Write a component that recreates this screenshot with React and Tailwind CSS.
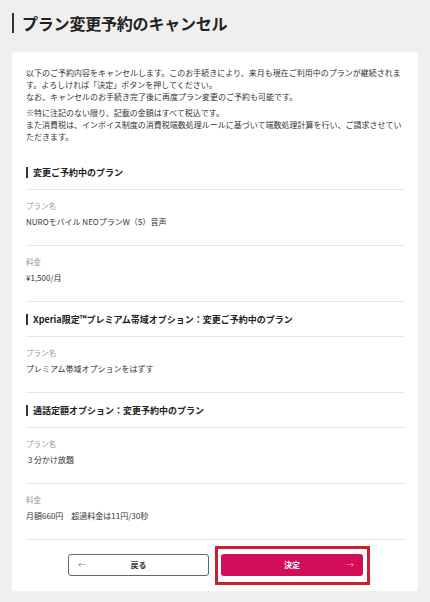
const font = { fontFamily: '"Noto Sans CJK JP", "Noto Sans", sans-serif' };

function SectionHeading({ children }) {
  return (
    <div className="flex h-[35px] items-center border-b border-[#e6e6e6]">
      <span className="mr-[5px] h-[11px] w-[2px] bg-[#333]" />
      <span className="text-[9px] font-bold leading-none text-[#222]">{children}</span>
    </div>
  );
}

function Row({ label, value }) {
  return (
    <div className="flex h-[56px] flex-col border-b border-[#e6e6e6] pt-[10px]">
      <span className="text-[7.5px] leading-[12px] text-[#9a9a9a]">{label}</span>
      <span className="mt-[4px] text-[8px] leading-[12px] text-[#333]">{value}</span>
    </div>
  );
}

export default function App() {
  return (
    <div className="min-h-screen bg-[#efefef] px-3 pb-3" style={font}>
      <h1 className="flex h-[52px] items-center pb-[6px]">
        <span className="mr-[8px] h-[20px] w-[2px] bg-[#333]" />
        <span className="text-[16px] font-bold leading-none tracking-[-0.2px] text-[#222]">
          プラン変更予約のキャンセル
        </span>
      </h1>

      <div className="rounded-[3px] bg-white pl-[14px] pr-[13px] pt-[15px] pb-[15px]">
        <p className="text-[8px] leading-[12px] text-[#333]">
          以下のご予約内容をキャンセルします。このお手続きにより、来月も現在ご利用中のプランが継続されます。よろしければ「決定」ボタンを押してください。
          <br />
          なお、キャンセルのお手続き完了後に再度プラン変更のご予約も可能です。
        </p>
        <p className="mt-[4px] text-[8px] leading-[12px] text-[#333]">
          ※特に注記のない限り、記載の金額はすべて税込です。
          <br />
          また消費税は、インボイス制度の消費税端数処理ルールに基づいて端数処理計算を行い、ご請求させていただきます。
        </p>

        <div className="mt-[12px]">
          <SectionHeading>変更ご予約中のプラン</SectionHeading>
          <Row label="プラン名" value="NUROモバイル NEOプランW（S）音声" />
          <Row label="料金" value="¥1,500/月" />

          <SectionHeading>Xperia限定™プレミアム帯域オプション：変更ご予約中のプラン</SectionHeading>
          <Row label="プラン名" value="プレミアム帯域オプションをはずす" />

          <SectionHeading>通話定額オプション：変更予約中のプラン</SectionHeading>
          <Row label="プラン名" value="３分かけ放題" />
          <Row label="料金" value="月額660円　超過料金は11円/30秒" />
        </div>

        <div className="mt-[14px] flex justify-center gap-[12px]">
          <button className="flex h-[22px] w-[141px] items-center rounded-[3px] border border-[#666] bg-white px-[9px] text-[8px] text-[#333]">
            <span className="text-[8px] text-[#888]">←</span>
            <span className="flex-1 pr-[8px] text-center font-bold">戻る</span>
          </button>
          <div className="relative">
            <button className="flex h-[22px] w-[142px] items-center rounded-[3px] bg-[#d30d57] px-[9px] text-[8px] text-white">
              <span className="flex-1 pl-[8px] text-center font-bold">決定</span>
              <span className="text-[8px] text-[#f4a5c0]">→</span>
            </button>
            <span className="pointer-events-none absolute -bottom-[9px] -left-[6px] -right-[7px] -top-[8px] border-[3px] border-[#c8202c]" />
          </div>
        </div>
      </div>
    </div>
  );
}
